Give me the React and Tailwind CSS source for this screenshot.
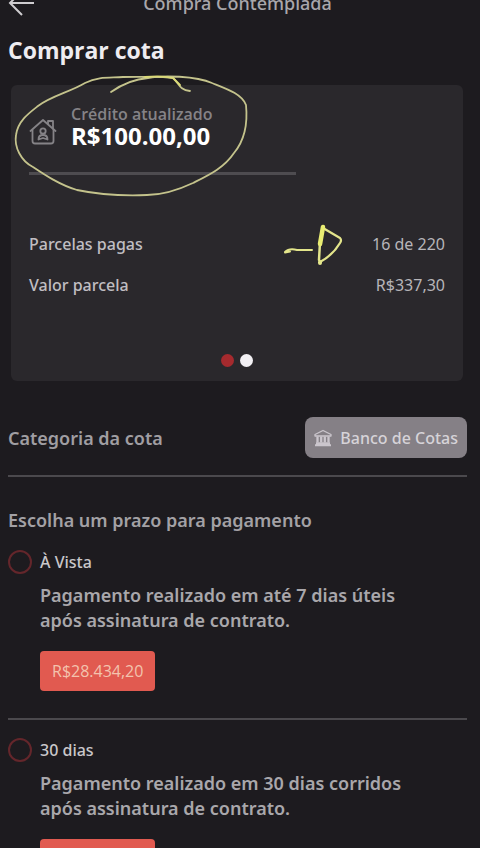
import React from "react";

const options = [
  {
    id: "a-vista",
    label: "À Vista",
    lines: ["Pagamento realizado em até 7 dias úteis", "após assinatura de contrato."],
    price: "R$28.434,20",
  },
  {
    id: "30-dias",
    label: "30 dias",
    lines: ["Pagamento realizado em 30 dias corridos", "após assinatura de contrato."],
    price: "R$28.434,20",
  },
];

function BackIcon() {
  return (
    <svg viewBox="0 0 28 28" className="h-7 w-7" fill="none" stroke="#cfcdd0" strokeWidth="2">
      <path d="M26 14H2M14 2 2 14l12 12" />
    </svg>
  );
}

function HouseIcon() {
  return (
    <svg
      viewBox="0 0 28 28"
      className="h-7 w-7 shrink-0"
      fill="none"
      stroke="#858387"
      strokeWidth="1.8"
      strokeLinecap="round"
      strokeLinejoin="round"
      aria-hidden="true"
    >
      <path d="M1.5 12 14 1l12.500 11" />
      <path d="M3.500 11v11a2.500 2.500 0 0 0 2.500 2.500h16a2.500 2.500 0 0 0 2.500-2.500V11" />
      <path d="M19 5V2h5v7.500" />
      <circle cx="14" cy="12" r="2.700" />
      <path d="M9.500 20.500c0-3 2-4.500 4.500-4.500s4.500 1.500 4.500 4.500l-4.500-1.500z" />
    </svg>
  );
}

function BankIcon() {
  return (
    <svg viewBox="0 0 18 18" className="h-[18px] w-[18px] shrink-0" fill="none" stroke="#cbc6cd" aria-hidden="true">
      <path d="M1 5.500 9 1.500l8 4v1.500H1z" strokeWidth="1.300" strokeLinejoin="round" />
      <path d="M3.500 7.500v6M7.200 7.500v6M10.800 7.500v6M14.500 7.500v6" strokeWidth="2.300" />
      <path d="M2 14.200h14M1 16.200h16" strokeWidth="2" />
    </svg>
  );
}

function CircleMark() {
  return (
    <svg
      viewBox="0 0 240 126"
      className="pointer-events-none absolute -top-3 left-0 h-[126px] w-60"
      fill="none"
      stroke="#c4c38c"
      strokeWidth="1.800"
      strokeLinecap="round"
      strokeLinejoin="round"
      aria-hidden="true"
    >
      <path d="M100 19C110 12 124 6 137 5c15-3 48-2 64 5 15 6 30 11 34 22 2 20-2 36-12 48-10 15-25 22-41 30-17 8-32 12-46 12-26 1-51-1-70-5C49 112 34 102 22 94 10 88 3 74 5 62 7 48 18 40 27 33c13-10 32-14 47-23 14-7 25-5 38-6 20 0 38-1 50 1 6 5 6 12 17 13" />
      <path d="M134 4c10-1 20-1 28 1l7 7" stroke="#dad976" />
    </svg>
  );
}

function ArrowMark() {
  return (
    <svg
      viewBox="0 0 60 44"
      className="pointer-events-none absolute -top-2 right-[102px] h-11 w-[60px]"
      fill="none"
      stroke="#e3e58b"
      strokeLinecap="round"
      strokeLinejoin="round"
      aria-hidden="true"
    >
      <path d="M2 28c3-3 8-3 12-2h15M2 28.500l5-1" strokeWidth="2" />
      <path d="M40 4 57 14q2 2 0 5Q50 31 37 38" strokeWidth="2.200" />
      <path d="M36 36l1-18" strokeWidth="2.500" />
      <path d="M37 20 40 3" strokeWidth="4.500" stroke="#e9ed72" />
      <path d="M37 38v1" strokeWidth="4" />
    </svg>
  );
}

function PaymentOption({ option }) {
  return (
    <li className="flex gap-2">
      <input
        type="radio"
        name="prazo"
        id={option.id}
        className="h-6 w-6 shrink-0 appearance-none rounded-full border-2 border-[#64262b] checked:bg-[#a52a2e]"
      />
      <div>
        <label htmlFor={option.id} className="block text-base leading-6 font-medium text-[#c9c7ca]">
          {option.label}
        </label>
        <p className="mt-[9px] text-lg leading-[25px] font-semibold text-[#a9a7ab]">
          {option.lines[0]}
          <br />
          {option.lines[1]}
        </p>
        <button
          type="button"
          className="mt-[18px] h-10 rounded-[4px] bg-[#e15a50] px-3 font-['Open_Sans',sans-serif] text-base text-[#f3c3ae]"
        >
          {option.price}
        </button>
      </div>
    </li>
  );
}

export default function App() {
  return (
    <div className="h-screen overflow-hidden bg-[#1d1b1f] pr-[13px] pl-2 font-['Noto_Sans','Open_Sans',sans-serif]">
      <header className="-mt-[11px] grid grid-cols-[28px_1fr_28px] items-center">
        <button type="button" aria-label="Voltar">
          <BackIcon />
        </button>
        <p className="text-center text-lg leading-6 font-medium text-[#a9a7ab]">Compra Contemplada</p>
      </header>

      <h1 className="mt-[17px] font-['Open_Sans',sans-serif] text-[23px] leading-8 font-bold text-[#eeecf0]">Comprar cota</h1>

      <section className="relative mt-[19px] mr-1 ml-[3px] rounded-md bg-[#2a282c] px-[18px] pt-[18px] pb-[14px]">
        <div className="flex items-end gap-[14px]">
          <HouseIcon />
          <div className="font-['Open_Sans',sans-serif]">
            <h2 className="text-base leading-[22px] font-semibold text-[#858387]">Crédito atualizado</h2>
            <p className="text-2xl leading-[22px] font-bold text-white">R$100.00,00</p>
          </div>
        </div>
        <hr className="mt-[25px] w-[267px] border-t-[3px] border-[#4e4c50]" />
        <dl className="mt-[57px] space-y-[17px] text-base leading-6 text-[#b7b5b9]">
          <div className="relative flex justify-between">
            <dt className="font-medium text-[#c0bec2]">Parcelas pagas</dt>
            <dd>16 de 220</dd>
            <ArrowMark />
          </div>
          <div className="flex justify-between">
            <dt className="font-medium text-[#c0bec2]">Valor parcela</dt>
            <dd>R$337,30</dd>
          </div>
        </dl>
        <div className="mt-[57px] flex justify-center gap-[6px]">
          <button type="button" aria-label="Página 1" className="h-[13px] w-[13px] rounded-full bg-[#a52a2e]" />
          <button type="button" aria-label="Página 2" className="h-[13px] w-[13px] rounded-full bg-[#f2f0f4]" />
        </div>
        <CircleMark />
      </section>

      <section className="mt-9 flex items-center justify-between border-b-2 border-[#4b494d] pb-[17px]">
        <h2 className="text-lg leading-6 font-semibold text-[#a09ea2]">Categoria da cota</h2>
        <button
          type="button"
          className="flex h-[41px] items-center gap-2 rounded-lg bg-[#858086] px-[9px] text-base font-medium text-[#d6d3d8]"
        >
          <BankIcon />
          Banco de Cotas
        </button>
      </section>

      <section className="mt-[31px]">
        <h2 className="text-lg leading-6 font-semibold text-[#a3a1a5]">Escolha um prazo para pagamento</h2>
        <ul className="mt-[18px]">
          <PaymentOption option={options[0]} />
          <li role="separator" className="mt-[27px] mb-[18px] h-[2px] bg-[#4b494d]" />
          <PaymentOption option={options[1]} />
        </ul>
      </section>
    </div>
  );
}
